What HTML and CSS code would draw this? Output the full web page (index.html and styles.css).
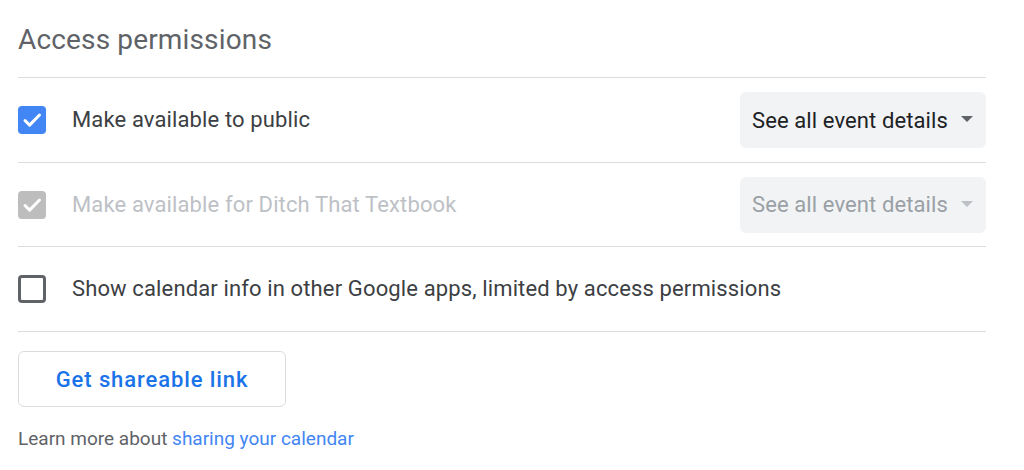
FILE: index.html
```html
<!DOCTYPE html>
<html lang="en">
<head>
<meta charset="utf-8">
<title>Access permissions</title>
<link rel="stylesheet" href="styles.css">
</head>
<body>
<main class="panel">
  <h2 class="title">Access permissions</h2>

  <div class="row">
    <div class="check-label">
      <span class="box box-checked">
        <svg viewBox="0 0 28 28" width="28" height="28"><path d="M7 14.5l4.6 4.6L21.5 9" fill="none" stroke="#fff" stroke-width="3" stroke-linecap="round" stroke-linejoin="round"/></svg>
      </span>
      <span class="label">Make available to public</span>
    </div>
    <div class="select">
      <span>See all event details</span>
      <span class="caret"></span>
    </div>
  </div>

  <div class="row row-disabled">
    <div class="check-label">
      <span class="box box-disabled">
        <svg viewBox="0 0 28 28" width="28" height="28"><path d="M7 14.5l4.6 4.6L21.5 9" fill="none" stroke="#fff" stroke-width="3" stroke-linecap="round" stroke-linejoin="round"/></svg>
      </span>
      <span class="label">Make available for Ditch That Textbook</span>
    </div>
    <div class="select">
      <span>See all event details</span>
      <span class="caret"></span>
    </div>
  </div>

  <div class="row">
    <div class="check-label">
      <span class="box box-empty"></span>
      <span class="label">Show calendar info in other Google apps, limited by access permissions</span>
    </div>
  </div>

  <button class="share-btn" type="button">Get shareable link</button>

  <p class="learn">Learn more about <a href="#">sharing your calendar</a></p>
</main>
</body>
</html>
```

FILE: styles.css
```css
html, body {
  margin: 0;
  padding: 0;
  background: #ffffff;
}

body {
  font-family: Roboto, "Liberation Sans", Arial, sans-serif;
  color: #3c4043;
}

.panel {
  width: 968px;
  padding-left: 18px;
}

.title {
  margin: 0;
  padding: 24px 0 21px;
  font-size: 28px;
  line-height: 32px;
  font-weight: 400;
  letter-spacing: 0.15px;
  color: #5f6368;
  border-bottom: 1px solid #dadce0;
}

.row {
  height: 84px;
  display: flex;
  align-items: center;
  justify-content: space-between;
  border-bottom: 1px solid #dadce0;
}

.row-disabled {
  height: 83px;
}

.check-label {
  display: flex;
  align-items: center;
  gap: 26px;
}

.box {
  width: 28px;
  height: 28px;
  border-radius: 4px;
  box-sizing: border-box;
  display: flex;
  flex: none;
}

.box-checked {
  background: #4285f4;
}

.box-disabled {
  background: #bdbdbd;
}

.box-empty {
  border: 3px solid #5f6368;
}

.label {
  font-size: 22px;
  line-height: 28px;
  letter-spacing: 0.13px;
  color: #3c4043;
}

.row-disabled .label {
  color: #bdc1c6;
}

.select {
  width: 246px;
  height: 56px;
  box-sizing: border-box;
  background: #f1f3f4;
  border-radius: 6px;
  display: flex;
  align-items: center;
  justify-content: space-between;
  padding: 0 13px 0 12px;
  font-size: 22px;
  letter-spacing: 0.1px;
  color: #202124;
}

.row-disabled .select {
  color: #9aa0a6;
}

.caret {
  width: 0;
  height: 0;
  border-left: 6px solid transparent;
  border-right: 6px solid transparent;
  border-top: 6px solid #5f6368;
  margin-top: -2px;
}

.row-disabled .caret {
  border-top-color: #bdc1c6;
}

.share-btn {
  display: block;
  margin-top: 19px;
  width: 268px;
  height: 56px;
  background: #fff;
  border: 1.5px solid #dadce0;
  border-radius: 6px;
  font-family: Roboto, "Liberation Sans", Arial, sans-serif;
  font-size: 22px;
  font-weight: 500;
  color: #1a73e8;
  letter-spacing: 0.9px;
  padding: 0;
}

.learn {
  margin: 21px 0 0;
  font-size: 19px;
  line-height: 22px;
  color: #5f6368;
}

.learn a {
  color: #4285f4;
  text-decoration: none;
}
```
